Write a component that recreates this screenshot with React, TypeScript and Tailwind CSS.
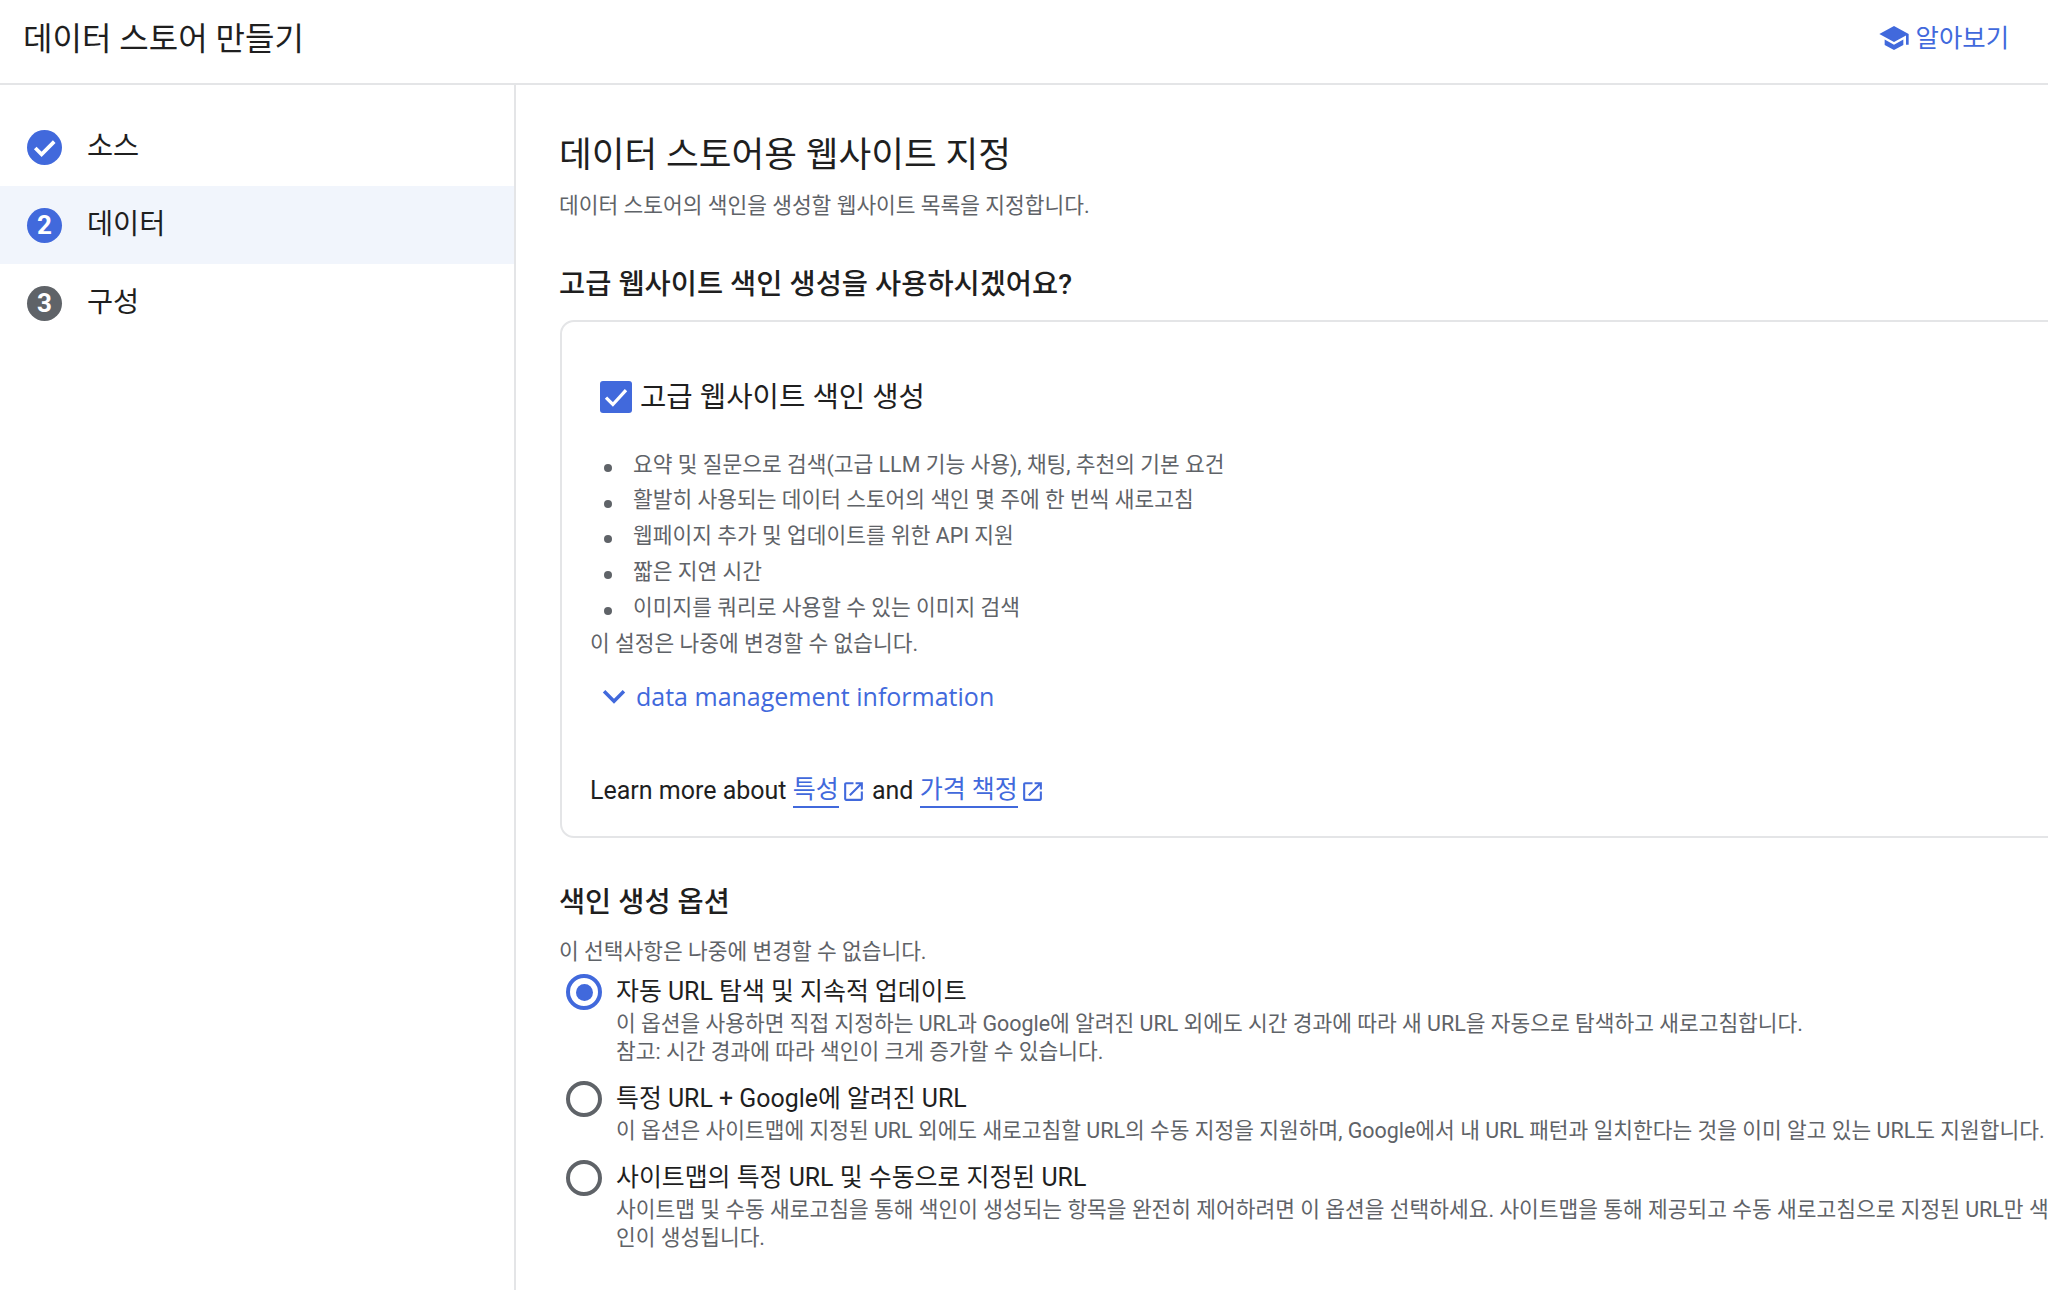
import React from "react";

const BLUE = "#4169dc";

function StepNum({ n, gray }: { n: string; gray?: boolean }) {
  return (
    <div className={`w-[35px] h-[35px] rounded-full flex items-center justify-center text-white text-[26px] font-bold leading-none ${gray ? "bg-[#5f6368]" : "bg-[#4169dc]"}`}>
      {n}
    </div>
  );
}

function Ext() {
  return (
    <svg viewBox="0 0 24 24" className="w-[25px] h-[25px] inline-block ml-[2px] fill-[#4169dc]">
      <path d="M19 19H5V5h7V3H5c-1.11 0-2 .9-2 2v14c0 1.1.89 2 2 2h14c1.1 0 2-.9 2-2v-7h-2v7zM14 3v2h3.59l-9.83 9.83 1.41 1.41L19 6.41V10h2V3h-7z" />
    </svg>
  );
}

function Radio({ checked }: { checked?: boolean }) {
  return (
    <div className={`w-[36px] h-[36px] rounded-full border-[4px] flex items-center justify-center shrink-0 ${checked ? "border-[#4169dc]" : "border-[#5f6368]"}`}>
      {checked && <div className="w-[17px] h-[17px] rounded-full bg-[#4169dc]" />}
    </div>
  );
}

function Option({ checked, title, children, className }: { checked?: boolean; title: string; children: React.ReactNode; className?: string }) {
  return (
    <div className={`flex items-start gap-[14px] pl-[7px] ${className ?? ""}`}>
      <Radio checked={checked} />
      <div className="min-w-0">
        <div className="text-[24.9px] leading-[36px] text-[#1f1f1f] whitespace-nowrap">{title}</div>
        <div className="text-[21.45px] leading-[28px] text-[#5f6368] whitespace-nowrap">{children}</div>
      </div>
    </div>
  );
}

const bullets = [
  "요약 및 질문으로 검색(고급 LLM 기능 사용), 채팅, 추천의 기본 요건",
  "활발히 사용되는 데이터 스토어의 색인 몇 주에 한 번씩 새로고침",
  "웹페이지 추가 및 업데이트를 위한 API 지원",
  "짧은 지연 시간",
  "이미지를 쿼리로 사용할 수 있는 이미지 검색",
];

export default function App() {
  return (
    <div className="w-[2048px] h-[1290px] overflow-hidden bg-white flex flex-col font-['Roboto','Noto_Sans_CJK_KR',sans-serif]">
      <header className="h-[85px] shrink-0 border-b-2 border-[#e4e5e7] flex items-center justify-between pl-[23px] pr-[39px] pb-[6px]">
        <h1 className="text-[32px] leading-[40px] text-[#1f1f1f]">데이터 스토어 만들기</h1>
        <div className="flex items-center gap-[6px] text-[25.4px] text-[#4169dc]">
          <svg viewBox="0 0 24 24" className="w-[32px] h-[32px] fill-[#4169dc]">
            <path d="M5 13.18v4L12 21l7-3.82v-4L12 17l-7-3.82zM12 3L1 9l11 6 9-4.91V17h2V9L12 3z" />
          </svg>
          알아보기
        </div>
      </header>
      <div className="flex-1 flex min-h-0">
        <aside className="w-[516px] shrink-0 border-r-2 border-[#e4e5e7] pt-[23px]">
          <div className="h-[78px] flex items-center gap-[25px] pl-[27px] text-[28.4px] text-[#1f1f1f]">
            <svg viewBox="0 0 36 36" className="w-[35px] h-[35px]">
              <circle cx="18" cy="18" r="18" fill={BLUE} />
              <path d="M8.5 18.5l6.5 6.5L28 12" fill="none" stroke="#fff" strokeWidth="3.8" />
            </svg>
            소스
          </div>
          <div className="h-[78px] flex items-center gap-[25px] pl-[27px] text-[28.4px] text-[#1f1f1f] bg-[#f1f5fc]">
            <StepNum n="2" />
            데이터
          </div>
          <div className="h-[78px] flex items-center gap-[25px] pl-[27px] text-[28.4px] text-[#1f1f1f]">
            <StepNum n="3" gray />
            구성
          </div>
        </aside>
        <main className="flex-1 min-w-0 overflow-hidden pl-[43px] pt-[48px]">
          <h2 className="text-[35.6px] leading-[44px] text-[#1f1f1f] whitespace-nowrap">데이터 스토어용 웹사이트 지정</h2>
          <p className="mt-[15px] text-[21.45px] leading-[28px] text-[#5f6368] whitespace-nowrap">데이터 스토어의 색인을 생성할 웹사이트 목록을 지정합니다.</p>
          <h3 className="mt-[47px] text-[28.45px] leading-[36px] font-medium text-[#1f1f1f] whitespace-nowrap">고급 웹사이트 색인 생성을 사용하시겠어요?</h3>
          <section className="mt-[17px] ml-[1px] w-[1600px] h-[518px] border-2 border-[#e4e5e7] rounded-[14px] pl-[28px] pt-[57px]">
            <div className="flex items-center gap-[8px] pl-[10px]">
              <div className="w-[32px] h-[32px] rounded-[3px] bg-[#4169dc] flex items-center justify-center">
                <svg viewBox="0 0 24 24" className="w-[30px] h-[30px]">
                  <path d="M4 12.5l5.5 5.5L20 6.5" fill="none" stroke="#fff" strokeWidth="2.6" />
                </svg>
              </div>
              <span className="text-[28.66px] leading-[36px] text-[#1f1f1f] whitespace-nowrap">고급 웹사이트 색인 생성</span>
            </div>
            <ul className="mt-[32px] pl-[14px]">
              {bullets.map((b) => (
                <li key={b} className="h-[35.7px] flex items-center text-[21.45px] text-[#5f6368] whitespace-nowrap">
                  <span className="w-[8px] h-[8px] rounded-full bg-[#5f6368] mr-[21px] mt-[6px] shrink-0" />
                  {b}
                </li>
              ))}
            </ul>
            <p className="mt-[1px] text-[21.45px] leading-[36px] text-[#5f6368] whitespace-nowrap">이 설정은 나중에 변경할 수 없습니다.</p>
            <div className="mt-[16px] flex items-center gap-[8px] pl-[10px] text-[25px] leading-[36px] font-medium text-[#4169dc] font-['Open_Sans','Noto_Sans_CJK_KR',sans-serif]">
              <svg viewBox="0 0 24 24" className="w-[28px] h-[28px]">
                <path d="M3.5 8l8.5 8.5L20.5 8" fill="none" stroke="#4169dc" strokeWidth="3" />
              </svg>
              data management information
            </div>
            <div className="mt-[59px] text-[25px] leading-[36px] text-[#1f1f1f] whitespace-nowrap flex items-center">
              Learn more about&nbsp;
              <span className="text-[#4169dc] border-b-2 border-[#4169dc] leading-[32px]">특성</span>
              <Ext />
              &nbsp;and&nbsp;
              <span className="text-[#4169dc] border-b-2 border-[#4169dc] leading-[32px]">가격 책정</span>
              <Ext />
            </div>
          </section>
          <h3 className="mt-[47px] text-[28.4px] leading-[36px] font-medium text-[#1f1f1f] whitespace-nowrap">색인 생성 옵션</h3>
          <p className="mt-[17px] text-[21.45px] leading-[28px] text-[#5f6368] whitespace-nowrap">이 선택사항은 나중에 변경할 수 없습니다.</p>
          <Option checked title="자동 URL 탐색 및 지속적 업데이트" className="mt-[8px]">
            이 옵션을 사용하면 직접 지정하는 URL과 Google에 알려진 URL 외에도 시간 경과에 따라 새 URL을 자동으로 탐색하고 새로고침합니다.
            <br />
            참고: 시간 경과에 따라 색인이 크게 증가할 수 있습니다.
          </Option>
          <Option title="특정 URL + Google에 알려진 URL" className="mt-[15px]">
            이 옵션은 사이트맵에 지정된 URL 외에도 새로고침할 URL의 수동 지정을 지원하며, Google에서 내 URL 패턴과 일치한다는 것을 이미 알고 있는 URL도 지원합니다.
          </Option>
          <Option title="사이트맵의 특정 URL 및 수동으로 지정된 URL" className="mt-[15px]">
            사이트맵 및 수동 새로고침을 통해 색인이 생성되는 항목을 완전히 제어하려면 이 옵션을 선택하세요. 사이트맵을 통해 제공되고 수동 새로고침으로 지정된 URL만 색
            <br />
            인이 생성됩니다.
          </Option>
        </main>
      </div>
    </div>
  );
}
